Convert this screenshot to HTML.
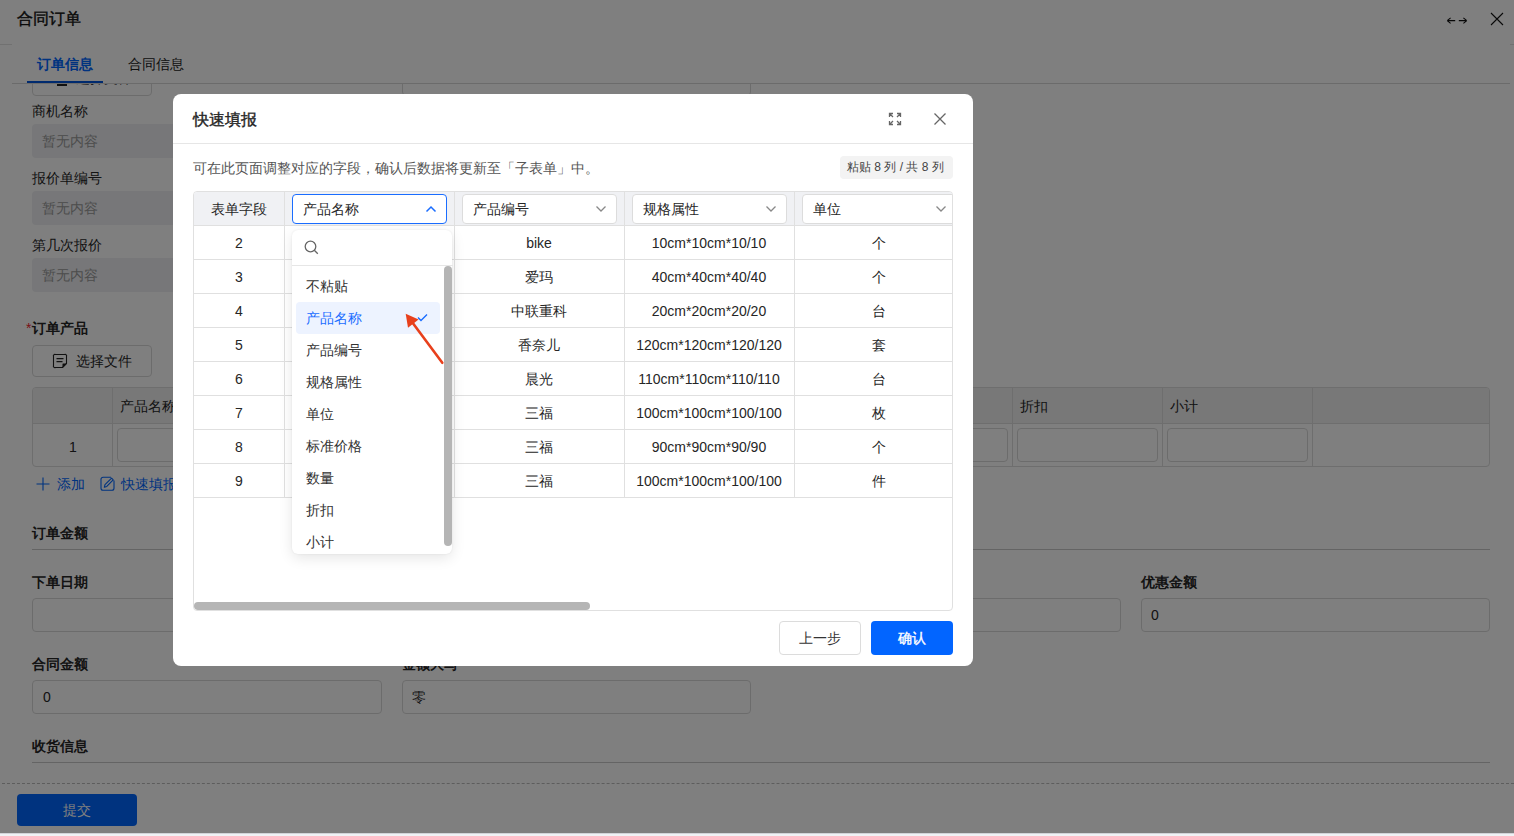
<!DOCTYPE html>
<html><head><meta charset="utf-8">
<style>
*{box-sizing:border-box;margin:0;padding:0}
html,body{width:1514px;height:836px;overflow:hidden;background:#f0f2f5}
body{font-family:"Liberation Sans",sans-serif;font-size:14px;color:#262626;position:relative}
.a{position:absolute;white-space:nowrap}
.t{line-height:20px;height:20px}
.b{font-weight:bold}
.page{position:absolute;left:0;top:0;width:1514px;height:833px;background:#fff;overflow:hidden}
.box{position:absolute;border:1px solid #d9d9d9;border-radius:4px;background:#fff}
.dis{position:absolute;border-radius:4px;background:#eeeff2}
.ph{color:#9a9a9a}
.overlay{position:absolute;left:0;top:0;width:1514px;height:833px;background:rgba(0,0,0,.5)}
.modal{position:absolute;left:173px;top:94px;width:800px;height:572px;background:#fff;border-radius:8px;overflow:hidden}
.cell{position:absolute;text-align:center;line-height:20px;height:20px;color:#262626}
.sel{position:absolute;height:30px;border:1px solid #dcdcdc;border-radius:4px;background:#fff}
.sel span{position:absolute;left:10px;top:4px;line-height:20px;color:#262626}
.sel svg{position:absolute}
.dd{position:absolute;left:292px;top:230px;width:160px;height:324px;background:#fff;border-radius:6px;box-shadow:0 4px 14px rgba(0,0,0,.10),0 0 2px rgba(0,0,0,.08)}
.it{position:absolute;left:14px;line-height:20px;height:20px;color:#333}
</style></head><body>
<div class="page">
<div class="a" style="left:17px;top:8px;font-size:16px;line-height:22px;color:#141414;-webkit-text-stroke:0.4px #141414">合同订单</div>
<div class="a" style="left:0;top:44px;width:1514px;height:1px;background:#e3e3e3"></div>
<svg class="a" style="left:1446px;top:15px" width="22" height="12" viewBox="0 0 22 12"><path d="M1.2 5.6H9.2M1.2 5.6L4.6 2.8M1.2 5.6L4.6 8.4M12.8 5.6H20.8M20.8 5.6L17.4 2.8M20.8 5.6L17.4 8.4" stroke="#111" stroke-width="1.1" fill="none"/></svg>
<svg class="a" style="left:1490px;top:12px" width="14" height="14" viewBox="0 0 14 14"><path d="M1 1L13 13M13 1L1 13" stroke="#111" stroke-width="1.1" fill="none"/></svg>
<div class="a" style="left:12px;top:44px;width:1498px;height:789px;background:#fff"></div>
<div class="box" style="left:32px;top:60px;width:120px;height:36px;"></div>
<div class="a t" style="left:76px;top:68px;color:#333">选择文件</div>
<div class="a" style="left:57px;top:84px;width:10px;height:1.5px;background:#222"></div>
<div class="box" style="left:402px;top:60px;width:349px;height:36px;"></div>
<div class="a" style="left:12px;top:44px;width:1498px;height:39px;background:#fff"></div>
<div class="a b" style="left:37px;top:54px;line-height:20px;color:#0066ff">订单信息</div>
<div class="a" style="left:128px;top:54px;line-height:20px;color:#222">合同信息</div>
<div class="a" style="left:12px;top:83px;width:1498px;height:1px;background:#d6d6d6"></div>
<div class="a" style="left:27px;top:81px;width:76px;height:2px;background:#0055dd"></div>
<div class="a t" style="left:32px;top:101px">商机名称</div>
<div class="dis" style="left:32px;top:124px;width:350px;height:34px"></div>
<div class="a t ph" style="left:42px;top:131px">暂无内容</div>
<div class="a t" style="left:32px;top:168px">报价单编号</div>
<div class="dis" style="left:32px;top:191px;width:350px;height:34px"></div>
<div class="a t ph" style="left:42px;top:198px">暂无内容</div>
<div class="a t" style="left:32px;top:235px">第几次报价</div>
<div class="dis" style="left:32px;top:258px;width:350px;height:34px"></div>
<div class="a t ph" style="left:42px;top:265px">暂无内容</div>
<div class="a t b" style="left:26px;top:318px"><span style="color:#f5222d;font-weight:normal;margin-right:1px">*</span>订单产品</div>
<div class="box" style="left:32px;top:345px;width:120px;height:32px"></div>
<svg class="a" style="left:52px;top:353px" width="16" height="16" viewBox="0 0 16 16"><path d="M3.5 1.5H12.5A1.5 1.5 0 0 1 14.5 3.5V10.5L10.5 14.5H3.5A1.5 1.5 0 0 1 1.5 12.5V3.5A1.5 1.5 0 0 1 3.5 1.5Z M4.5 5.6H11.5 M4.5 8.6H10.5" stroke="#222" stroke-width="1.1" fill="none" stroke-linejoin="round"/><path d="M14.5 10.5H11A0.5 0.5 0 0 0 10.5 11V14.5Z" fill="#222"/></svg>
<div class="a t" style="left:76px;top:351px">选择文件</div>
<div class="box" style="left:32px;top:387px;width:1458px;height:80px;border-color:#dcdcdc;overflow:hidden"><div class="a" style="left:0;top:0;width:1456px;height:36px;background:#f0f0f0;border-bottom:1px solid #dcdcdc"></div></div>
<div class="a" style="left:112px;top:388px;width:1px;height:78px;background:#dcdcdc"></div>
<div class="a" style="left:262px;top:388px;width:1px;height:78px;background:#dcdcdc"></div>
<div class="a" style="left:412px;top:388px;width:1px;height:78px;background:#dcdcdc"></div>
<div class="a" style="left:562px;top:388px;width:1px;height:78px;background:#dcdcdc"></div>
<div class="a" style="left:712px;top:388px;width:1px;height:78px;background:#dcdcdc"></div>
<div class="a" style="left:862px;top:388px;width:1px;height:78px;background:#dcdcdc"></div>
<div class="a" style="left:1012px;top:388px;width:1px;height:78px;background:#dcdcdc"></div>
<div class="a" style="left:1162px;top:388px;width:1px;height:78px;background:#dcdcdc"></div>
<div class="a" style="left:1312px;top:388px;width:1px;height:78px;background:#dcdcdc"></div>
<div class="box" style="left:117px;top:428px;width:141px;height:34px"></div>
<div class="box" style="left:267px;top:428px;width:141px;height:34px"></div>
<div class="box" style="left:417px;top:428px;width:141px;height:34px"></div>
<div class="box" style="left:567px;top:428px;width:141px;height:34px"></div>
<div class="box" style="left:717px;top:428px;width:141px;height:34px"></div>
<div class="box" style="left:867px;top:428px;width:141px;height:34px"></div>
<div class="box" style="left:1017px;top:428px;width:141px;height:34px"></div>
<div class="box" style="left:1167px;top:428px;width:141px;height:34px"></div>
<div class="a t" style="left:120px;top:396px">产品名称</div>
<div class="a t" style="left:1020px;top:396px">折扣</div>
<div class="a t" style="left:1170px;top:396px">小计</div>
<div class="a t" style="left:68px;top:437px;width:10px;text-align:center">1</div>
<svg class="a" style="left:36px;top:477px" width="14" height="14" viewBox="0 0 14 14"><path d="M7 0.5V13.5M0.5 7H13.5" stroke="#0066ff" stroke-width="1.1"/></svg>
<div class="a t" style="left:57px;top:474px;color:#0066ff">添加</div>
<svg class="a" style="left:100px;top:476px" width="15" height="15" viewBox="0 0 15 15"><path d="M11 1.2H3A2 2 0 0 0 1 3.2V12.2A2 2 0 0 0 3 14.2H12A2 2 0 0 0 14 12.2V4.5 M4.3 11.3L5 8.6L11.6 2.2L13.2 3.8L6.8 10.4Z" stroke="#0066ff" stroke-width="1.1" fill="none" stroke-linejoin="round"/></svg>
<div class="a t" style="left:121px;top:474px;color:#0066ff">快速填报</div>
<div class="a t b" style="left:32px;top:523px">订单金额</div>
<div class="a" style="left:32px;top:549px;width:1458px;height:1px;background:#c8c8c8"></div>
<div class="a t b" style="left:32px;top:572px">下单日期</div>
<div class="box" style="left:32px;top:598px;width:350px;height:34px"></div>
<div class="box" style="left:771px;top:598px;width:350px;height:34px"></div>
<div class="a t b" style="left:1141px;top:572px">优惠金额</div>
<div class="box" style="left:1141px;top:598px;width:349px;height:34px"></div>
<div class="a t" style="left:1151px;top:605px">0</div>
<div class="a t b" style="left:32px;top:654px">合同金额</div>
<div class="box" style="left:32px;top:680px;width:350px;height:34px"></div>
<div class="a t" style="left:43px;top:687px">0</div>
<div class="a t b" style="left:402px;top:654px">金额大写</div>
<div class="box" style="left:402px;top:680px;width:349px;height:34px"></div>
<div class="a t" style="left:412px;top:687px">零</div>
<div class="a t b" style="left:32px;top:736px">收货信息</div>
<div class="a" style="left:32px;top:762px;width:1458px;height:1px;background:#c8c8c8"></div>
<div class="a" style="left:2px;top:783px;width:1512px;height:1px;border-top:1px dashed #bbb"></div>
<div class="a" style="left:17px;top:794px;width:120px;height:32px;background:#0066ff;border-radius:4px"></div>
<div class="a t" style="left:17px;top:800px;width:120px;text-align:center;color:#fff">提交</div>
</div>
<div class="overlay"></div>
<div class="a" style="left:0;top:833px;width:1514px;height:1px;background:#d2d5d9"></div>
<div class="modal"></div>
<div class="a" style="left:193px;top:109px;font-size:16px;line-height:22px;color:#262626;-webkit-text-stroke:0.4px #262626">快速填报</div>
<div class="a" style="left:173px;top:143px;width:800px;height:1px;background:#e6e6e6"></div>
<svg class="a" style="left:888px;top:112px" width="14" height="14" viewBox="0 0 14 14"><path d="M1.5 5V1.5H5 M1.5 1.5L5 5 M9 1.5H12.5V5 M12.5 1.5L9 5 M1.5 9V12.5H5 M1.5 12.5L5 9 M9 12.5H12.5V9 M12.5 12.5L9 9" stroke="#666" stroke-width="1.3" fill="none"/></svg>
<svg class="a" style="left:933px;top:112px" width="14" height="14" viewBox="0 0 14 14"><path d="M1.5 1.5L12.5 12.5M12.5 1.5L1.5 12.5" stroke="#666" stroke-width="1.3" fill="none"/></svg>
<div class="a t" style="left:193px;top:158px;color:#555">可在此页面调整对应的字段，确认后数据将更新至「子表单」中。</div>
<div class="a" style="left:840px;top:156px;width:113px;height:23px;background:#f3f3f3;border-radius:4px"></div>
<div class="a" style="left:847px;top:157px;font-size:12px;line-height:20px;color:#444">粘贴 8 列 / 共 8 列</div>
<div class="a" style="left:193px;top:191px;width:760px;height:420px;border:1px solid #e0e0e0;border-radius:4px;overflow:hidden"><div class="a" style="left:0;top:0;width:758px;height:34px;background:#f0f1f4;border-bottom:1px solid #e0e0e0"></div>
<div class="a" style="left:90px;top:0;width:1px;height:306px;background:#e0e0e0"></div>
<div class="a" style="left:260px;top:0;width:1px;height:306px;background:#e0e0e0"></div>
<div class="a" style="left:430px;top:0;width:1px;height:306px;background:#e0e0e0"></div>
<div class="a" style="left:600px;top:0;width:1px;height:306px;background:#e0e0e0"></div>
<div class="a" style="left:0;top:67px;width:758px;height:1px;background:#e0e0e0"></div>
<div class="a" style="left:0;top:101px;width:758px;height:1px;background:#e0e0e0"></div>
<div class="a" style="left:0;top:135px;width:758px;height:1px;background:#e0e0e0"></div>
<div class="a" style="left:0;top:169px;width:758px;height:1px;background:#e0e0e0"></div>
<div class="a" style="left:0;top:203px;width:758px;height:1px;background:#e0e0e0"></div>
<div class="a" style="left:0;top:237px;width:758px;height:1px;background:#e0e0e0"></div>
<div class="a" style="left:0;top:271px;width:758px;height:1px;background:#e0e0e0"></div>
<div class="a" style="left:0;top:305px;width:758px;height:1px;background:#e0e0e0"></div>
<div class="a" style="left:0;top:410px;width:396px;height:8px;background:#b5b5b5;border-radius:4px"></div>
<div class="cell" style="left:0;top:7px;width:90px">表单字段</div>
<div class="sel" style="left:98px;top:2px;width:155px;border:1.5px solid #1a6dff"><span style="left:9.5px;top:3.5px">产品名称</span><svg width="12" height="8" viewBox="0 0 12 8" style="right:9px;top:10px"><path d="M1.5 6.5L6 2L10.5 6.5" stroke="#1a6dff" stroke-width="1.5" fill="none"/></svg></div>
<div class="sel" style="left:268px;top:2px;width:155px"><span>产品编号</span><svg width="12" height="8" viewBox="0 0 12 8" style="right:9px;top:10px"><path d="M1.5 1.5L6 6L10.5 1.5" stroke="#888" stroke-width="1.3" fill="none"/></svg></div>
<div class="sel" style="left:438px;top:2px;width:155px"><span>规格属性</span><svg width="12" height="8" viewBox="0 0 12 8" style="right:9px;top:10px"><path d="M1.5 1.5L6 6L10.5 1.5" stroke="#888" stroke-width="1.3" fill="none"/></svg></div>
<div class="sel" style="left:608px;top:2px;width:155px"><span>单位</span><svg width="12" height="8" viewBox="0 0 12 8" style="right:9px;top:10px"><path d="M1.5 1.5L6 6L10.5 1.5" stroke="#888" stroke-width="1.3" fill="none"/></svg></div>
<div class="cell" style="left:0;top:41px;width:90px">2</div>
<div class="cell" style="left:260px;top:41px;width:170px">bike</div>
<div class="cell" style="left:430px;top:41px;width:170px">10cm*10cm*10/10</div>
<div class="cell" style="left:600px;top:41px;width:169px">个</div>
<div class="cell" style="left:0;top:75px;width:90px">3</div>
<div class="cell" style="left:260px;top:75px;width:170px">爱玛</div>
<div class="cell" style="left:430px;top:75px;width:170px">40cm*40cm*40/40</div>
<div class="cell" style="left:600px;top:75px;width:169px">个</div>
<div class="cell" style="left:0;top:109px;width:90px">4</div>
<div class="cell" style="left:260px;top:109px;width:170px">中联重科</div>
<div class="cell" style="left:430px;top:109px;width:170px">20cm*20cm*20/20</div>
<div class="cell" style="left:600px;top:109px;width:169px">台</div>
<div class="cell" style="left:0;top:143px;width:90px">5</div>
<div class="cell" style="left:260px;top:143px;width:170px">香奈儿</div>
<div class="cell" style="left:430px;top:143px;width:170px">120cm*120cm*120/120</div>
<div class="cell" style="left:600px;top:143px;width:169px">套</div>
<div class="cell" style="left:0;top:177px;width:90px">6</div>
<div class="cell" style="left:260px;top:177px;width:170px">晨光</div>
<div class="cell" style="left:430px;top:177px;width:170px">110cm*110cm*110/110</div>
<div class="cell" style="left:600px;top:177px;width:169px">台</div>
<div class="cell" style="left:0;top:211px;width:90px">7</div>
<div class="cell" style="left:260px;top:211px;width:170px">三福</div>
<div class="cell" style="left:430px;top:211px;width:170px">100cm*100cm*100/100</div>
<div class="cell" style="left:600px;top:211px;width:169px">枚</div>
<div class="cell" style="left:0;top:245px;width:90px">8</div>
<div class="cell" style="left:260px;top:245px;width:170px">三福</div>
<div class="cell" style="left:430px;top:245px;width:170px">90cm*90cm*90/90</div>
<div class="cell" style="left:600px;top:245px;width:169px">个</div>
<div class="cell" style="left:0;top:279px;width:90px">9</div>
<div class="cell" style="left:260px;top:279px;width:170px">三福</div>
<div class="cell" style="left:430px;top:279px;width:170px">100cm*100cm*100/100</div>
<div class="cell" style="left:600px;top:279px;width:169px">件</div></div>
<div class="a" style="left:779px;top:621px;width:82px;height:34px;border:1px solid #dcdcdc;border-radius:4px;background:#fff"></div>
<div class="a t" style="left:779px;top:628px;width:82px;text-align:center;color:#333">上一步</div>
<div class="a" style="left:871px;top:621px;width:82px;height:34px;border-radius:4px;background:#0265ff"></div>
<div class="a t" style="left:871px;top:628px;width:82px;text-align:center;color:#fff;-webkit-text-stroke:0.35px #fff">确认</div>
<div class="dd"><svg class="a" style="left:12px;top:10px" width="15" height="15" viewBox="0 0 15 15"><circle cx="6.5" cy="6.5" r="5.3" stroke="#666" stroke-width="1.3" fill="none"/><path d="M10.3 10.3L13.8 13.8" stroke="#666" stroke-width="1.3"/></svg>
<div class="a" style="left:0;top:35px;width:161px;height:1px;background:#e6e6e6"></div>
<div class="a" style="left:4px;top:72px;width:144px;height:32px;background:#edf3ff;border-radius:4px"></div>
<div class="a" style="left:152px;top:36px;width:8px;height:280px;background:#b5b5b5;border-radius:4px"></div>
<div class="it" style="top:46px;color:#333">不粘贴</div>
<div class="it" style="top:78px;color:#1a6dff">产品名称</div>
<div class="it" style="top:110px;color:#333">产品编号</div>
<div class="it" style="top:142px;color:#333">规格属性</div>
<div class="it" style="top:174px;color:#333">单位</div>
<div class="it" style="top:206px;color:#333">标准价格</div>
<div class="it" style="top:238px;color:#333">数量</div>
<div class="it" style="top:270px;color:#333">折扣</div>
<div class="it" style="top:302px;color:#333">小计</div>
<svg class="a" style="left:125px;top:83px" width="11" height="9" viewBox="0 0 11 9"><path d="M1 4.5L4 7.5L10 1.5" stroke="#1a6dff" stroke-width="1.4" fill="none"/></svg></div>
<svg class="a" style="left:0;top:0" width="1514" height="836" viewBox="0 0 1514 836"><path d="M442.3 362.8L412 322" stroke="#e8401c" stroke-width="2.6" stroke-linecap="round"/><path d="M405.7 313.7L418.6 319.6L408 327.8Z" fill="#e8401c"/></svg>
</body></html>
